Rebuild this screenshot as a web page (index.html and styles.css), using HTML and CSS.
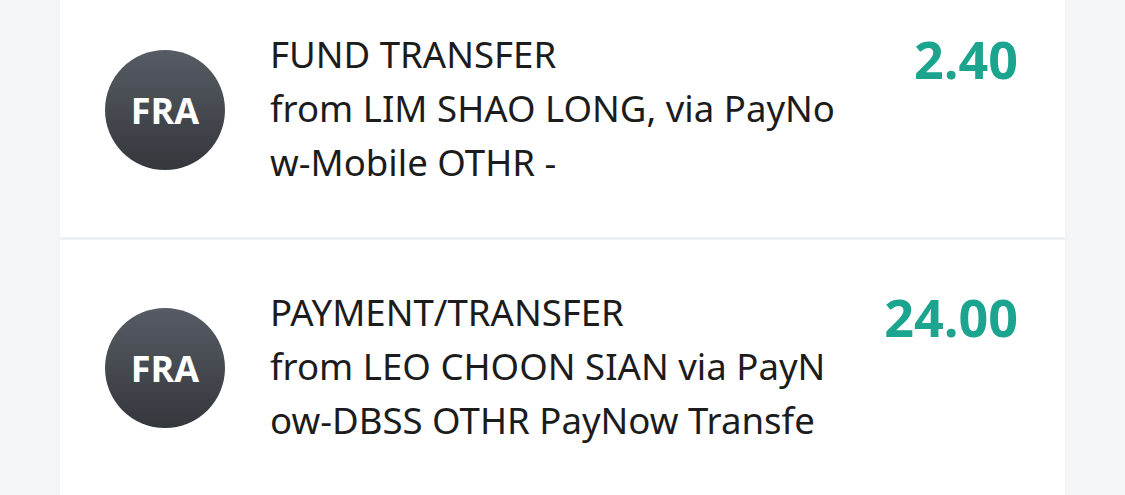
FILE: index.html
```html
<!DOCTYPE html>
<html>
<head>
<meta charset="utf-8">
<link rel="stylesheet" href="styles.css">
</head>
<body>
<div class="page">
  <div class="card">
    <div class="row row-first">
      <div class="avatar">FRA</div>
      <div class="desc">FUND TRANSFER<br>from LIM SHAO LONG, via PayNow-Mobile OTHR -</div>
      <div class="amount">2.40</div>
    </div>
    <div class="row">
      <div class="avatar">FRA</div>
      <div class="desc">PAYMENT/TRANSFER<br>from LEO CHOON SIAN via PayNow-DBSS OTHR PayNow Transfe</div>
      <div class="amount">24.00</div>
    </div>
  </div>
</div>
</body>
</html>
```
FILE: styles.css
```css
html, body {
  margin: 0;
  padding: 0;
  height: 100%;
  overflow: hidden;
}
body {
  background: #f5f6f7;
  font-family: "Open Sans", "Liberation Sans", sans-serif;
}
.page {
  padding: 0 60px;
  height: 100%;
}
.card {
  background: #ffffff;
  box-shadow: 0 0 10px rgba(0, 0, 0, 0.025);
  margin-top: -18px;
  min-height: calc(100% + 40px);
}
.row {
  display: flex;
  align-items: flex-start;
  padding: 45px 47px 48px 45px;
  border-bottom: 3px solid #eef1f1;
}
.row:last-child {
  border-bottom: none;
}
.avatar {
  flex: none;
  width: 120px;
  height: 120px;
  border-radius: 50%;
  background: linear-gradient(180deg, #575c64 0%, #34373c 100%);
  color: #ffffff;
  font-weight: 700;
  font-size: 36px;
  display: flex;
  align-items: center;
  justify-content: center;
  align-self: flex-start;
  margin-top: 23px;
}
.desc {
  margin-left: 45px;
  width: 571px;
  font-family: "Noto Sans", "Open Sans", sans-serif;
  font-size: 36.6px;
  line-height: 54px;
  color: #1c1c1c;
  word-break: break-all;
}
.amount {
  flex: 1;
  text-align: right;
  font-size: 52px;
  font-weight: 700;
  line-height: 60px;
  color: #1ba48e;
  margin-top: 2px;
}
```
